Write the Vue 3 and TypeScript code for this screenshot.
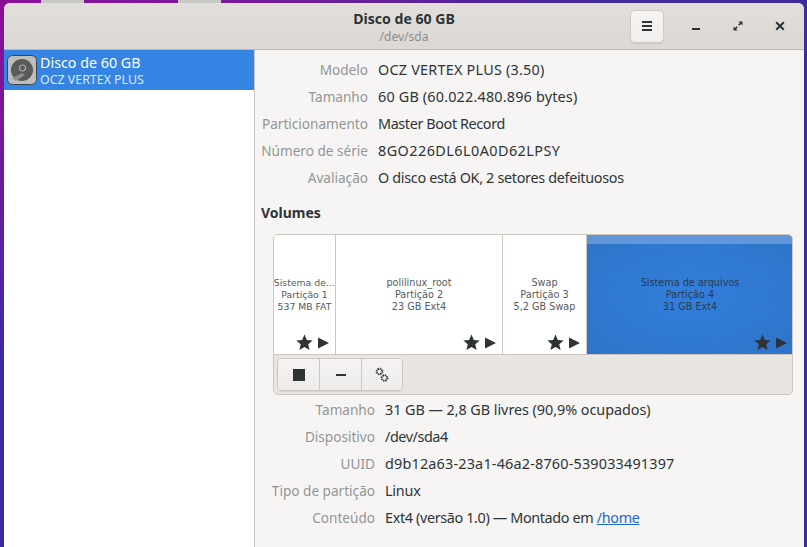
<script setup lang="ts">
interface Row { label: string; value: string; fit: number; link?: string }
interface Part { name: string; sub: string; size: string; width: number; selected?: boolean }

const driveRows: Row[] = [
  { label: 'Modelo', value: 'OCZ VERTEX PLUS (3.50)', fit: 0.23 },
  { label: 'Tamanho', value: '60 GB (60.022.480.896 bytes)', fit: 0.18 },
  { label: 'Particionamento', value: 'Master Boot Record', fit: -0.39 },
  { label: 'Número de série', value: '8GO226DL6L0A0D62LPSY', fit: 0.45 },
  { label: 'Avaliação', value: 'O disco está OK, 2 setores defeituosos', fit: -0.32 },
]
const volumeRows: Row[] = [
  { label: 'Tamanho', value: '31 GB — 2,8 GB livres (90,9% ocupados)', fit: -0.05 },
  { label: 'Dispositivo', value: '/dev/sda4', fit: -0.44 },
  { label: 'UUID', value: 'd9b12a63-23a1-46a2-8760-539033491397', fit: 0.19 },
  { label: 'Tipo de partição', value: 'Linux', fit: -0.2 },
  { label: 'Conteúdo', value: 'Ext4 (versão 1.0) — Montado em ', link: '/home', fit: -0.36 },
]
const parts: Part[] = [
  { name: 'Sistema de…', sub: 'Partição 1', size: '537 MB FAT', width: 61 },
  { name: 'polilinux_root', sub: 'Partição 2', size: '23 GB Ext4', width: 166 },
  { name: 'Swap', sub: 'Partição 3', size: '5,2 GB Swap', width: 83 },
  { name: 'Sistema de arquivos', sub: 'Partição 4', size: '31 GB Ext4', width: 206, selected: true },
]
</script>

<template>
  <div class="desktop">
    <div class="behind">
      <span class="scrap first"></span>
      <span class="scrap second"></span>
    </div>
    <div class="window">
      <header class="titlebar">
        <div class="title">
          <strong>Disco de 60 GB</strong>
          <span>/dev/sda</span>
        </div>
        <button class="menu" aria-label="Menu">
          <svg width="12" height="12" viewBox="0 0 12 12"><path d="M1 1h10v2H1zM1 5h10v2H1zM1 9h10v2H1z" fill="#2e3436" /></svg>
        </button>
        <div class="winctl">
          <svg width="10" height="10" viewBox="0 0 10 10"><rect x="1" y="7" width="8" height="2" fill="#2e3436" /></svg>
        </div>
        <div class="winctl">
          <svg width="10" height="10" viewBox="0 0 10 10"><path d="M5.5 0.5H9.5V4.5L8.1 3.1 6.4 4.8 5.2 3.6 6.9 1.9ZM4.5 9.5H0.5V5.5L1.9 6.9 3.6 5.2 4.8 6.4 3.1 8.1Z" fill="#2e3436" /></svg>
        </div>
        <div class="winctl">
          <svg width="10" height="10" viewBox="0 0 10 10"><path d="M1.2 1.2 8.8 8.8M8.8 1.2 1.2 8.8" stroke="#2e3436" stroke-width="2" fill="none" /></svg>
        </div>
      </header>
      <div class="body">
        <aside class="sidebar">
          <div class="drive">
            <svg class="drive-icon" width="30" height="30" viewBox="0 0 30 30">
              <rect x="0.5" y="0.5" width="29" height="29" rx="5" fill="#bdbdbb" stroke="#3c4650" />
              <circle cx="15" cy="15" r="11" fill="#5a5a58" />
              <circle cx="15.5" cy="13" r="3" fill="none" stroke="#a8a8a6" stroke-width="1.2" />
              <path d="M5 23 15 18 18 20 9 26Z" fill="#8e8e8c" />
            </svg>
            <div class="drive-text">
              <div class="drive-name">Disco de 60 GB</div>
              <div class="drive-model">OCZ VERTEX PLUS</div>
            </div>
          </div>
        </aside>
        <main class="content">
          <section class="info drive-info">
            <div v-for="r in driveRows" :key="r.label" class="row">
              <span class="label">{{ r.label }}</span>
              <span class="value" :style="{ letterSpacing: r.fit + 'px' }">{{ r.value }}</span>
            </div>
          </section>
          <h2 class="volumes">Volumes</h2>
          <div class="grid">
            <div class="parts">
              <div
                v-for="p in parts"
                :key="p.sub"
                class="part"
                :class="{ selected: p.selected }"
                :style="{ width: p.width + 'px' }"
              >
                <div class="part-text">
                  <div>{{ p.name }}</div>
                  <div>{{ p.sub }}</div>
                  <div>{{ p.size }}</div>
                </div>
                <div class="part-icons">
                  <svg width="17" height="17" viewBox="0 0 16 16"><path d="M8 0.5 10.2 5.6 15.7 6.1 11.5 9.7 12.8 15.1 8 12.2 3.2 15.1 4.5 9.7 0.3 6.1 5.8 5.6Z" fill="#2e3436" /></svg>
                  <svg width="11" height="12" viewBox="0 0 11 12"><path d="M0 0.5 11 6 0 11.5Z" fill="#2e3436" /></svg>
                </div>
              </div>
            </div>
            <div class="toolbar">
              <div class="btn-group">
                <button class="tool" aria-label="Parar">
                  <svg width="12" height="12" viewBox="0 0 12 12"><rect width="12" height="12" fill="#2e3436" /></svg>
                </button>
                <button class="tool" aria-label="Remover">
                  <svg width="10" height="10" viewBox="0 0 10 10"><rect y="4" width="10" height="2" fill="#2e3436" /></svg>
                </button>
                <button class="tool" aria-label="Configurações">
                  <svg width="14" height="16" viewBox="0 0 14 16" fill="none" stroke="#2e3436">
                    <circle cx="4.5" cy="4.5" r="2.6" stroke-width="1.4" stroke-dasharray="1.4 0.6" />
                    <circle cx="4.5" cy="4.5" r="3.4" stroke-width="1" stroke-dasharray="1.3 1.4" />
                    <circle cx="9.5" cy="11" r="2.6" stroke-width="1.4" stroke-dasharray="1.4 0.6" />
                    <circle cx="9.5" cy="11" r="3.4" stroke-width="1" stroke-dasharray="1.3 1.4" />
                  </svg>
                </button>
              </div>
            </div>
          </div>
          <section class="info volume-info">
            <div v-for="r in volumeRows" :key="r.label" class="row">
              <span class="label">{{ r.label }}</span>
              <span class="value" :style="{ letterSpacing: r.fit + 'px' }">{{ r.value }}<a v-if="r.link" href="#">{{ r.link }}</a></span>
            </div>
          </section>
        </main>
      </div>
    </div>
  </div>
</template>

<style>
html, body { margin: 0; padding: 0; }
</style>

<style scoped>
.desktop {
  width: 807px;
  height: 547px;
  overflow: hidden;
  box-sizing: border-box;
  padding: 0 3px 0 4px;
  display: flex;
  flex-direction: column;
  background: linear-gradient(150deg, #8a0f96 0%, #7a189c 12%, #3f2b9c 36%, #3a2a9a 100%);
  font-family: "Noto Sans", sans-serif;
  font-size: 14.4px;
  color: #2e3436;
}
.behind { height: 3px; flex: none; display: flex; }
.scrap { height: 3px; width: 43px; background: #c8c8c4; }
.scrap.first { margin-left: 37px; }
.scrap.second { margin-left: 94px; }
.window {
  flex: 1;
  min-height: 0;
  display: flex;
  flex-direction: column;
  border-radius: 6px 6px 0 0;
  overflow: hidden;
  background: #f6f5f4;
}
.titlebar {
  height: 46px;
  flex: none;
  display: flex;
  align-items: center;
  padding-right: 3px;
  background: linear-gradient(#e1dedb, #dcd8d4);
  border-bottom: 1px solid #bfb8b1;
  position: relative;
}
.title {
  position: absolute;
  left: 0;
  right: 0;
  top: 7px;
  display: flex;
  flex-direction: column;
  align-items: center;
  pointer-events: none;
}
.title strong { font-size: 14.1px; line-height: 18px; font-weight: 700; color: #2e3436; }
.title span { font-size: 12px; color: #8a8d8e; line-height: 17px; }
.menu {
  margin-left: auto;
  margin-right: 11px;
  width: 34px;
  height: 33px;
  padding: 0;
  display: flex;
  align-items: center;
  justify-content: center;
  border: 1px solid #cfcac5;
  border-radius: 5px;
  background: linear-gradient(#f6f5f4, #f0eeec);
  box-shadow: 0 1px 1px rgba(0, 0, 0, 0.08);
}
.winctl {
  width: 42px;
  height: 26px;
  display: flex;
  align-items: center;
  justify-content: center;
}
.body { flex: 1; min-height: 0; display: flex; }
.sidebar {
  width: 250px;
  flex: none;
  background: #fff;
  border-right: 1px solid #cdc7c2;
}
.drive {
  height: 40px;
  display: flex;
  align-items: center;
  gap: 3px;
  padding-left: 3px;
  background: #3584e4;
  color: #fff;
}
.drive-icon { flex: none; }
.drive-text { display: flex; flex-direction: column; }
.drive-name { font-size: 14.3px; line-height: 18px; color: #fff; }
.drive-model { font-size: 12.4px; line-height: 15px; color: #dbe9fa; }
.content { flex: 1; min-width: 0; display: flex; flex-direction: column; background: #f6f5f4; }
.info { display: flex; flex-direction: column; }
.row { height: 27px; display: flex; align-items: center; }
.label { text-align: right; color: #929596; flex: none; font-size: 13.6px; }
.value { color: #2e3436; white-space: nowrap; }
.value a { color: #1b6acb; text-decoration: underline; }
.drive-info { padding-top: 6px; }
.drive-info .label { width: 113px; margin-right: 10px; }
.volume-info { padding-top: 1px; }
.volume-info .label { width: 120px; margin-right: 10px; }
.volumes {
  margin: 13px 0 0 6px;
  font-size: 14px;
  font-weight: 700;
  line-height: 18px;
  color: #2e3436;
  height: 30px;
}
.grid {
  width: 520px;
  margin-left: 18px;
  box-sizing: border-box;
  border: 1px solid #cdc7c2;
  border-radius: 5px;
  overflow: hidden;
  background: #e9e5e2;
}
.parts { display: flex; height: 119px; background: #fff; border-bottom: 1px solid #cdc7c2; }
.part {
  flex: none;
  position: relative;
  display: flex;
  flex-direction: column;
  align-items: center;
  justify-content: center;
  border-right: 1px solid #cdc7c2;
  font-family: "DejaVu Sans", sans-serif;
  font-size: 9.7px;
  color: #555a5c;
  line-height: 12px;
  text-align: center;
  white-space: nowrap;
  overflow: hidden;
}
.part:first-child { font-size: 9.3px; }
.part:last-child { border-right: 0; }
.part-text { margin-top: 1px; }
.part.selected {
  color: #2a3a50;
  background:
    linear-gradient(rgba(255, 255, 255, 0.24), rgba(255, 255, 255, 0.24)) top / 100% 9px no-repeat,
    radial-gradient(ellipse at center, #327fdc 0%, #2e73c8 100%);
}
.part-icons {
  position: absolute;
  right: 6px;
  bottom: 3px;
  display: flex;
  align-items: center;
  gap: 5px;
}
.toolbar { height: 39px; display: flex; align-items: center; padding-left: 3px; }
.btn-group {
  display: flex;
  height: 33px;
  box-sizing: border-box;
  border: 1px solid #cdc7c2;
  border-radius: 5px;
  overflow: hidden;
  box-shadow: 0 1px 1px rgba(0, 0, 0, 0.08);
}
.tool {
  width: 42px;
  padding: 0;
  display: flex;
  align-items: center;
  justify-content: center;
  border: 0;
  border-right: 1px solid #cdc7c2;
  background: linear-gradient(#f4f3f1, #eeecea);
}
.tool:last-child { border-right: 0; width: 40px; }
</style>
